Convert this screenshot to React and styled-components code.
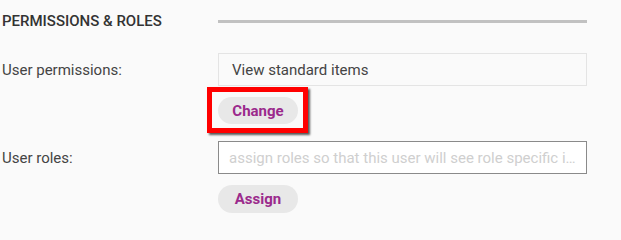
import styled, { createGlobalStyle } from "styled-components";

const Global = createGlobalStyle`
	body {
		margin: 0;
		background: #fafafa;
		font-family: Roboto, "Liberation Sans", sans-serif;
		color: #444;
	}
`;

export default function App() {
	return (
		<>
			<Global />
			<Section>
				<Heading>Permissions &amp; Roles</Heading>
				<Rule />

				<Label>User permissions:</Label>
				<ValueBox>View standard items</ValueBox>

				<span />
				<Actions $gap={11}>
					<Highlight>
						<PillButton>Change</PillButton>
					</Highlight>
				</Actions>

				<Label $top={17}>User roles:</Label>
				<RoleInput
					$top={17}
					placeholder="assign roles so that this user will see role specific items"
				/>

				<span />
				<Actions $gap={11}>
					<PillButton $tall>Assign</PillButton>
				</Actions>
			</Section>
		</>
	);
}

const Section = styled.section`
	display: grid;
	grid-template-columns: 216px 369px;
	align-items: center;
	padding: 11px 2px 0;
`;

const Heading = styled.h2`
	margin: 0;
	height: 21px;
	line-height: 21px;
	font-size: 15px;
	font-weight: 500;
	text-transform: uppercase;
	color: #333;
`;

const Rule = styled.div`
	height: 3px;
	background: #c1c1c1;
`;

const Label = styled.div`
	font-size: 15px;
	color: #444;
	margin-top: ${(p) => p.$top ?? 21}px;
`;

const ValueBox = styled.div`
	margin-top: 21px;
	height: 33px;
	box-sizing: border-box;
	border: 1px solid #e4e4e4;
	background: #fafafa;
	padding: 0 13px;
	display: flex;
	align-items: center;
	font-size: 15px;
	color: #444;
`;

const RoleInput = styled.input`
	margin-top: ${(p) => p.$top}px;
	width: 369px;
	height: 33px;
	box-sizing: border-box;
	border: 1px solid #8a8a8a;
	background: #fff;
	padding: 0 10px;
	font-family: inherit;
	font-size: 15px;
	color: #444;
	outline: none;
	text-overflow: ellipsis;

	&::placeholder {
		color: #cfcfcf;
	}
`;

const Actions = styled.div`
	display: flex;
	margin-top: ${(p) => p.$gap}px;
`;

const Highlight = styled.div`
	position: relative;
	display: flex;

	&::after {
		content: "";
		position: absolute;
		left: -11px;
		right: -10px;
		top: -10px;
		bottom: -9px;
		border: 5px solid #f00;
		box-shadow: 2px 2px 2px rgba(0, 0, 0, 0.65);
		pointer-events: none;
	}
`;

const PillButton = styled.button`
	min-width: 80px;
	height: ${(p) => (p.$tall ? 28 : 27)}px;
	padding: 0 14px;
	border: none;
	border-radius: 14px;
	background: #e8e8e8;
	font-family: inherit;
	font-size: 15px;
	font-weight: 700;
	color: #9b2a8c;
	cursor: pointer;
`;
